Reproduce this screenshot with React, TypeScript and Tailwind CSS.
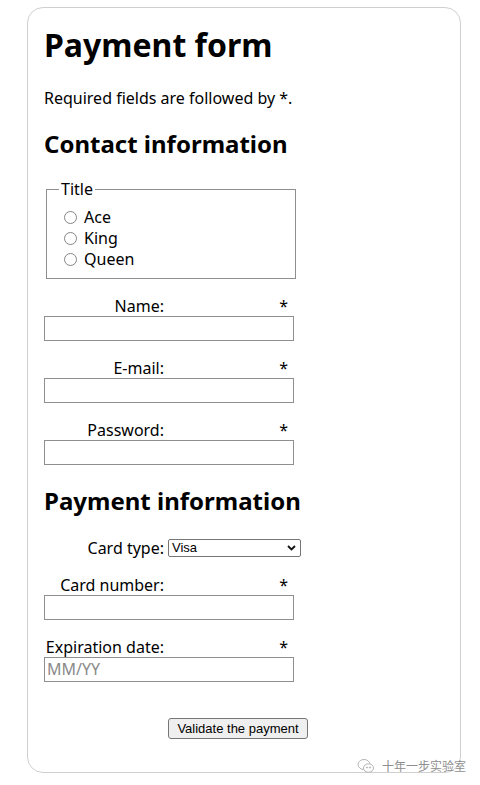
import React from 'react';

const fieldBorder = 'border border-[#8f8f8f]';

function Field({ label, placeholder }: { label: string; placeholder?: string }) {
  return (
    <div className="mt-4 w-[250px]">
      <div className="flex h-[21px] items-start pt-[2px] leading-[19px]">
        <span className="w-[120px] text-right">{label}</span>
        <span className="flex-1" />
        <span className="pr-[6px]">*</span>
      </div>
      <div className={`h-[25px] w-[250px] bg-white ${fieldBorder} px-[2px] leading-[23px] text-[#8a8a8a]`}>
        {placeholder}
      </div>
    </div>
  );
}

function Radio({ label }: { label: string }) {
  return (
    <div className="flex h-[21px] items-center">
      <span className="ml-[5px] mr-[7px] h-[13px] w-[13px] rounded-full border border-[#858585] bg-white" />
      <span>{label}</span>
    </div>
  );
}

export default function App() {
  return (
    <div className="min-h-[785px] bg-white pl-[27px] pt-[7px] font-['Noto_Sans',sans-serif] text-[16px] leading-[21px] text-black">
      <div className="relative h-[766px] w-[434px] rounded-[16px] border border-[#cfcfcf] px-4">
        <h1 className="mt-[18px] text-[32px] font-bold leading-[38px]">Payment form</h1>
        <p className="mt-[24px]">Required fields are followed by *.</p>

        <h2 className="mt-[20px] text-[24px] font-bold leading-[29px]">Contact information</h2>

        <fieldset className={`mx-[2px] mt-[21px] w-[250px] ${fieldBorder} px-[12px] pb-[8px] pt-[7px]`}>
          <legend className="px-[2px]">Title</legend>
          <Radio label="Ace" />
          <Radio label="King" />
          <Radio label="Queen" />
        </fieldset>

        <div className="mt-[3px]">
          <Field label="Name:" />
          <Field label="E-mail:" />
          <Field label="Password:" />
        </div>

        <h2 className="mt-[21px] text-[24px] font-bold leading-[29px]">Payment information</h2>

        <div className="mt-[22px] flex h-[21px] items-center">
          <span className="w-[120px] pt-[2px] text-right">Card type:</span>
          <div className="ml-[4px] flex h-[18px] w-[133px] items-center justify-between rounded-[2px] border border-[#767676] bg-white pl-[3px] pr-[4px] font-['Liberation_Sans',sans-serif] text-[13px]">
            <span>Visa</span>
            <svg width="9" height="6" viewBox="0 0 9 6" fill="none">
              <path d="M1 1l3.5 3.5L8 1" stroke="#111" strokeWidth="1.8" />
            </svg>
          </div>
        </div>

        <Field label="Card number:" />
        <Field label="Expiration date:" placeholder="MM/YY" />

        <div className="mt-[35px] pl-[124px]">
          <button className="h-[21px] w-[140px] rounded-[3px] border border-[#767676] bg-[#efefef] font-['Liberation_Sans',sans-serif] text-[13px] leading-[19px]">
            Validate the payment
          </button>
        </div>

        <div className="absolute bottom-[-2px] right-[-6px] flex items-center gap-[7px] font-['Noto_Sans_CJK_SC',sans-serif] text-[12px] leading-[16px] text-[#8e8e8e]">
          <svg width="18" height="16" viewBox="0 0 18 16" fill="none" stroke="#b5b5b5" strokeWidth="1">
            <ellipse cx="7" cy="6.5" rx="6" ry="5" />
            <ellipse cx="11.5" cy="10" rx="5" ry="4.2" fill="white" />
            <circle cx="10" cy="9.5" r="0.6" fill="#b5b5b5" />
            <circle cx="13" cy="9.5" r="0.6" fill="#b5b5b5" />
          </svg>
          <span>十年一步实验室</span>
        </div>
      </div>
    </div>
  );
}
